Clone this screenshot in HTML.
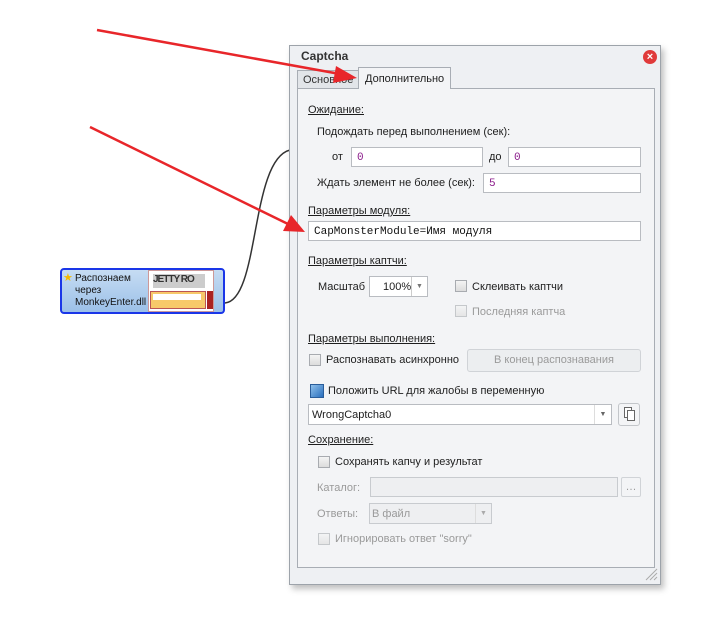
<!DOCTYPE html>
<html><head><meta charset="utf-8"><style>
*{box-sizing:border-box;margin:0;padding:0}
body{width:721px;height:619px;background:#fff;position:relative;overflow:hidden;font-family:"Liberation Sans","DejaVu Sans",sans-serif;font-size:11px;color:#1e1e1e}
.a{position:absolute}
.u{text-decoration:underline}
.inp{position:absolute;background:#fff;border:1px solid #b9bcc1;height:20px;font-family:"Liberation Mono",monospace;font-size:11px;color:#8a1a8a;padding:4px 5px 0}
.cb{position:absolute;width:12px;height:12px;border:1px solid #a8abb0;background:linear-gradient(#f4f4f4,#dcdcdc)}
.dis{color:#9a9a9a}
</style></head><body>
<svg class="a" style="left:0;top:0" width="721" height="619">
<path d="M225 303 C 260 300, 250 160, 290 150" stroke="#333" stroke-width="1.5" fill="none"/>
</svg>
<div class="a" style="left:60px;top:268px;width:165px;height:46px;border:2px solid #1a36e8;border-radius:4px;background:linear-gradient(#c6dcf3,#9cc0e8)"></div>
<div class="a" style="left:63px;top:271px;font-size:11px;color:#f5b800">★</div>
<div class="a" style="left:75px;top:273px;line-height:12px;font-size:10px;color:#111">Распознаем<br>через<br>MonkeyEnter.dll</div>
<div class="a" style="left:148px;top:270px;width:66px;height:42px;background:#fff;border:1px solid #c99">
 <div class="a" style="left:4px;top:3px;width:52px;height:14px;background:#ccc;font-size:10px;font-weight:bold;color:#333;letter-spacing:-1px">JETTY RO</div>
 <div class="a" style="left:1px;top:20px;width:56px;height:18px;background:#f7c96a;border:1px solid #b55"></div>
 <div class="a" style="left:4px;top:23px;width:48px;height:6px;background:#fff"></div>
 <div class="a" style="left:58px;top:20px;width:6px;height:18px;background:#a22"></div>
</div>
<div class="a" style="left:289px;top:45px;width:372px;height:540px;background:#eef0f3;border:1px solid #9da3aa;box-shadow:3px 4px 6px rgba(0,0,0,.25)"></div>
<div class="a" style="left:301px;top:49px;font-weight:bold;font-size:12px;color:#333">Captcha</div>
<div class="a" style="left:643px;top:50px;width:14px;height:14px;border-radius:50%;background:#e03a3a;color:#fff;font-size:11px;font-weight:bold;text-align:center;line-height:14px">×</div>
<div class="a" style="left:297px;top:70px;width:62px;height:19px;border:1px solid #a8adb4;background:#e2e5e9;padding:3px 0 0 5px;color:#333;font-size:11px">Основное</div>
<div class="a" style="left:358px;top:67px;width:93px;height:22px;border:1px solid #a8adb4;border-bottom:none;background:#f3f4f6;padding:5px 0 0 6px;font-size:11px;z-index:2">Дополнительно</div>
<div class="a" style="left:297px;top:88px;width:358px;height:480px;border:1px solid #a8adb4;background:#f3f4f6"></div>

<div class="a u" style="left:308px;top:104px">Ожидание:</div>
<div class="a" style="left:317px;top:126px">Подождать перед выполнением (сек):</div>
<div class="a" style="left:332px;top:151px">от</div>
<div class="inp" style="left:351px;top:147px;width:132px">0</div>
<div class="a" style="left:489px;top:151px">до</div>
<div class="inp" style="left:508px;top:147px;width:133px">0</div>
<div class="a" style="left:317px;top:177px">Ждать элемент не более (сек):</div>
<div class="inp" style="left:483px;top:173px;width:158px">5</div>
<div class="a u" style="left:308px;top:205px">Параметры модуля:</div>
<div class="inp" style="left:308px;top:221px;width:333px;color:#111">CapMonsterModule=Имя модуля</div>
<div class="a u" style="left:308px;top:255px">Параметры каптчи:</div>
<div class="a" style="left:318px;top:281px">Масштаб</div>
<div class="a" style="left:369px;top:276px;width:59px;height:21px;background:#fff;border:1px solid #b9bcc1;padding:4px 0 0 13px">100%</div>
<div class="a" style="left:411px;top:277px;width:16px;height:19px;border-left:1px solid #ccc;color:#777;font-size:7px;text-align:center;line-height:19px">▼</div>
<div class="cb" style="left:455px;top:280px"></div>
<div class="a" style="left:472px;top:281px">Склеивать каптчи</div>
<div class="cb" style="left:455px;top:305px;opacity:.6"></div>
<div class="a dis" style="left:472px;top:306px">Последняя каптча</div>
<div class="a u" style="left:308px;top:333px">Параметры выполнения:</div>
<div class="cb" style="left:309px;top:354px"></div>
<div class="a" style="left:326px;top:354px">Распознавать асинхронно</div>
<div class="a dis" style="left:467px;top:349px;width:174px;height:23px;border:1px solid #d0d3d7;border-radius:3px;background:#eceef0;text-align:center;line-height:21px">В конец распознавания</div>
<div class="a" style="left:310px;top:384px;width:14px;height:14px;background:linear-gradient(135deg,#8fc0ec,#2a6fbd);border:1px solid #2a5d9a"></div>
<div class="a" style="left:328px;top:385px">Положить URL для жалобы в переменную</div>
<div class="a" style="left:308px;top:404px;width:304px;height:21px;background:#fff;border:1px solid #b9bcc1;padding:4px 0 0 3px">WrongCaptcha0</div>
<div class="a" style="left:594px;top:405px;width:17px;height:19px;border-left:1px solid #ddd;color:#666;font-size:7px;text-align:center;line-height:19px">▼</div>
<div class="a" style="left:618px;top:403px;width:22px;height:23px;border:1px solid #c3c6ca;border-radius:3px;background:#f3f4f6"></div>
<div class="a" style="left:624px;top:407px;width:8px;height:11px;border:1px solid #666;background:#fff"></div>
<div class="a" style="left:627px;top:410px;width:8px;height:11px;border:1px solid #666;background:#fff"></div>
<div class="a u" style="left:308px;top:434px">Сохранение:</div>
<div class="cb" style="left:318px;top:456px"></div>
<div class="a" style="left:335px;top:456px">Сохранять капчу и результат</div>
<div class="a dis" style="left:317px;top:482px">Каталог:</div>
<div class="a" style="left:370px;top:477px;width:248px;height:20px;border:1px solid #c8cbcf;background:#eeeff1"></div>
<div class="a dis" style="left:621px;top:477px;width:20px;height:20px;border:1px solid #d0d3d7;border-radius:2px;text-align:center;line-height:18px">…</div>
<div class="a dis" style="left:317px;top:508px">Ответы:</div>
<div class="a dis" style="left:369px;top:503px;width:123px;height:21px;border:1px solid #c8cbcf;background:#eeeff1;padding:4px 0 0 2px">В файл</div>
<div class="a" style="left:475px;top:504px;width:16px;height:19px;border-left:1px solid #ddd;color:#aaa;font-size:7px;text-align:center;line-height:19px">▼</div>
<div class="cb" style="left:318px;top:533px;opacity:.6"></div>
<div class="a dis" style="left:335px;top:533px">Игнорировать ответ "sorry"</div>
<svg class="a" style="left:645px;top:568px" width="14" height="14"><g stroke="#aaa"><line x1="1" y1="12" x2="12" y2="1"/><line x1="5" y1="12" x2="12" y2="5"/><line x1="9" y1="12" x2="12" y2="9"/></g></svg>
<svg class="a" style="left:0;top:0" width="721" height="619">
<g stroke="#e8262a" stroke-width="2.5" fill="#e8262a">
<line x1="97" y1="30" x2="340" y2="74"/>
<polygon points="357,78 336,66 333,83" stroke="none"/>
<line x1="90" y1="127" x2="288" y2="224"/>
<polygon points="305,232 291,215 283,231" stroke="none"/>
</g></svg>
</body></html>
